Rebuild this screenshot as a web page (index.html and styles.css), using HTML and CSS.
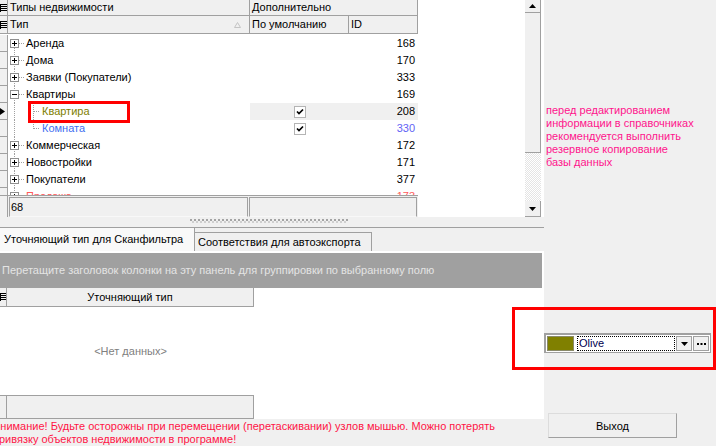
FILE: index.html
```html
<!DOCTYPE html>
<html lang="ru">
<head>
  <meta charset="UTF-8" />
  <title>Типы недвижимости</title>
  <link rel="stylesheet" href="styles.css">
</head>
<body>
  <div class="app">
    <div class="left">
      <div class="top">
        <div class="grid">
          <div class="hrow band">
            <div class="ind"><svg class="lines" width="7" height="8"><path d="M0.5 0V8M1 0.5H7M1 2.5H7M1 4.5H7M1 6.5H7" stroke="#000"/></svg></div>
            <div class="hcell w-type">Типы недвижимости</div>
            <div class="hcell w-extra">Дополнительно</div>
          </div>
          <div class="hrow cols">
            <div class="ind"><svg class="lines" width="7" height="8"><path d="M0.5 0V8M1 0.5H7M1 2.5H7M1 4.5H7M1 6.5H7" stroke="#000"/></svg></div>
            <div class="hcell w-type">Тип<svg class="sort" width="7" height="6"><path d="M3.5 0.5L6.5 5.5H0.5Z" fill="none" stroke="#c4c4c4"/></svg></div>
            <div class="hcell w-def">По умолчанию</div>
            <div class="hcell w-id">ID</div>
          </div>

          <div class="rows">
            <div class="row">
              <div class="ind"></div>
              <div class="tree first"><svg class="exp" width="9" height="9"><rect x="0.5" y="0.5" width="8" height="8" fill="#fff" stroke="#8f8f8f"/><path d="M2 4.5H7M4.5 2V7" stroke="#000"/></svg><span>Аренда</span></div>
              <div class="def"></div>
              <div class="id">168</div>
            </div>
            <div class="row">
              <div class="ind"></div>
              <div class="tree"><svg class="exp" width="9" height="9"><rect x="0.5" y="0.5" width="8" height="8" fill="#fff" stroke="#8f8f8f"/><path d="M2 4.5H7M4.5 2V7" stroke="#000"/></svg><span>Дома</span></div>
              <div class="def"></div>
              <div class="id">170</div>
            </div>
            <div class="row">
              <div class="ind"></div>
              <div class="tree"><svg class="exp" width="9" height="9"><rect x="0.5" y="0.5" width="8" height="8" fill="#fff" stroke="#8f8f8f"/><path d="M2 4.5H7M4.5 2V7" stroke="#000"/></svg><span>Заявки (Покупатели)</span></div>
              <div class="def"></div>
              <div class="id">333</div>
            </div>
            <div class="row">
              <div class="ind"></div>
              <div class="tree"><svg class="exp" width="9" height="9"><rect x="0.5" y="0.5" width="8" height="8" fill="#fff" stroke="#8f8f8f"/><path d="M2 4.5H7" stroke="#000"/></svg><span>Квартиры</span></div>
              <div class="def"></div>
              <div class="id">169</div>
            </div>
            <div class="row current">
              <div class="ind"><svg class="arrow" width="5" height="7"><path d="M0 0L5 3.5L0 7Z" fill="#000"/></svg></div>
              <div class="tree child"><span class="olive">Квартира</span></div>
              <div class="def"><svg class="check" width="12" height="12"><rect x="0.5" y="0.5" width="11" height="11" fill="#fff" stroke="#b4b4b4"/><path d="M3 5.5L5 7.5L9 3.5" fill="none" stroke="#000" stroke-width="1.7"/></svg></div>
              <div class="id">208</div>
            </div>
            <div class="row">
              <div class="ind"></div>
              <div class="tree child last"><span class="blue">Комната</span></div>
              <div class="def"><svg class="check" width="12" height="12"><rect x="0.5" y="0.5" width="11" height="11" fill="#fff" stroke="#b4b4b4"/><path d="M3 5.5L5 7.5L9 3.5" fill="none" stroke="#000" stroke-width="1.7"/></svg></div>
              <div class="id blue-id">330</div>
            </div>
            <div class="row">
              <div class="ind"></div>
              <div class="tree"><svg class="exp" width="9" height="9"><rect x="0.5" y="0.5" width="8" height="8" fill="#fff" stroke="#8f8f8f"/><path d="M2 4.5H7M4.5 2V7" stroke="#000"/></svg><span>Коммерческая</span></div>
              <div class="def"></div>
              <div class="id">172</div>
            </div>
            <div class="row">
              <div class="ind"></div>
              <div class="tree"><svg class="exp" width="9" height="9"><rect x="0.5" y="0.5" width="8" height="8" fill="#fff" stroke="#8f8f8f"/><path d="M2 4.5H7M4.5 2V7" stroke="#000"/></svg><span>Новостройки</span></div>
              <div class="def"></div>
              <div class="id">171</div>
            </div>
            <div class="row">
              <div class="ind"></div>
              <div class="tree"><svg class="exp" width="9" height="9"><rect x="0.5" y="0.5" width="8" height="8" fill="#fff" stroke="#8f8f8f"/><path d="M2 4.5H7M4.5 2V7" stroke="#000"/></svg><span>Покупатели</span></div>
              <div class="def"></div>
              <div class="id">377</div>
            </div>
            <div class="row">
              <div class="ind"></div>
              <div class="tree"><svg class="exp" width="9" height="9"><rect x="0.5" y="0.5" width="8" height="8" fill="#fff" stroke="#8f8f8f"/><path d="M2 4.5H7M4.5 2V7" stroke="#000"/></svg><span class="red">Продажа</span></div>
              <div class="def"></div>
              <div class="id red">173</div>
            </div>

            <div class="focus-mark"></div>
          </div>

          <div class="gfoot">
            <div class="ind"></div>
            <div class="fpanel">
              <div class="fcell f-type">68</div>
              <div class="fcell f-extra"></div>
            </div>
          </div>
        </div>

        <div class="vscroll">
          <div class="sbtn up"><svg width="7" height="4"><path d="M3.5 0L7 4H0Z" fill="#000"/></svg></div>
          <div class="thumb"></div>
          <div class="track"></div>
          <div class="sbtn down"><svg width="7" height="4"><path d="M0 0H7L3.5 4Z" fill="#000"/></svg></div>
        </div>
      </div>

      <div class="splitter"><div class="grip"></div></div>

      <div class="tabs">
        <div class="tab active">Уточняющий тип для Сканфильтра</div>
        <div class="tab">Соответствия для автоэкспорта</div>
      </div>

      <div class="group">Перетащите заголовок колонки на эту панель для группировки по выбранному полю</div>

      <div class="sub">
        <div class="shead">
          <div class="ind"><svg class="lines" width="6" height="8"><path d="M0.5 0V8M1 0.5H6M1 2.5H6M1 4.5H6M1 6.5H6" stroke="#000"/></svg></div>
          <div class="scol">Уточняющий тип</div>
        </div>
        <div class="empty">&lt;Нет данных&gt;</div>
        <div class="sfoot">
          <div class="ind"></div>
          <div class="scol"></div>
        </div>
      </div>

      <div class="warning">
        <div class="warn-text">Внимание! Будьте осторожны при перемещении (перетаскивании) узлов мышью. Можно потерять<br>привязку объектов недвижимости в программе!</div>
      </div>
    </div>

    <div class="right">
      <div class="note">перед редактированием<br>информации в справочниках<br>рекомендуется выполнить<br>резервное копирование<br>базы данных</div>

      <div class="combo">
        <div class="swatch"></div>
        <div class="cname">Olive</div>
        <div class="cbtn"><svg width="7" height="4"><path d="M0 0H7L3.5 4Z" fill="#000"/></svg></div>
        <div class="cbtn dots"><svg width="9" height="2"><path d="M0 0H2V2H0ZM3.5 0H5.5V2H3.5ZM7 0H9V2H7Z" fill="#000"/></svg></div>
      </div>

      <button class="exit">Выход</button>
    </div>

    <div class="combo-mark"></div>
  </div>
</body>
</html>
```

FILE: styles.css
```css
body {
  margin: 0;
  background: #f0f0f0;
  font-family: "Liberation Sans", Arial, sans-serif;
  font-size: 11px;
  color: #000;
}
.app {
  position: relative;
  display: flex;
  width: 716px;
  height: 446px;
  overflow: hidden;
}
.left {
  width: 544px;
  display: flex;
  flex-direction: column;
  background: #fff;
}
.right {
  flex: 1;
  display: flex;
  flex-direction: column;
  align-items: flex-start;
  background: #f0f0f0;
}

/* top grid */
.top {
  display: flex;
  height: 217px;
  background: #fff;
}
.grid {
  width: 525px;
  display: flex;
  flex-direction: column;
}
.ind {
  flex: none;
  width: 8px;
  box-sizing: border-box;
  background: #f0f0f0;
  border-right: 1px solid #a0a0a0;
  border-bottom: 1px solid #a0a0a0;
  display: flex;
  align-items: center;
}
.hrow {
  display: flex;
}
.band {
  height: 16px;
  line-height: 15px;
}
.cols {
  height: 18px;
  line-height: 17px;
}
.hcell {
  box-sizing: border-box;
  background: #f0f0f0;
  border-right: 1px solid #a0a0a0;
  border-bottom: 1px solid #a0a0a0;
  padding-left: 2px;
  white-space: nowrap;
  overflow: hidden;
  display: flex;
  align-items: center;
}
.w-type { width: 242px; }
.w-extra { width: 168px; }
.w-def { width: 99px; }
.w-id { width: 69px; }
.sort {
  margin-left: auto;
  margin-right: 8px;
}

.rows {
  position: relative;
  height: 161px;
  box-sizing: border-box;
  padding-top: 1px;
  overflow: hidden;
}
.row {
  display: flex;
  height: 17px;
  line-height: 17px;
  white-space: nowrap;
}
.tree {
  --dv: repeating-linear-gradient(#a0a0a0 0 1px, transparent 1px 2px);
  --dh: repeating-linear-gradient(90deg, #a0a0a0 0 1px, transparent 1px 2px);
  flex: none;
  width: 242px;
  box-sizing: border-box;
  display: flex;
  align-items: center;
  background: var(--dh) 11px 8px / 6px 1px no-repeat, var(--dv) 6px 0 / 1px 100% no-repeat;
}
.tree.first {
  background: var(--dh) 11px 8px / 6px 1px no-repeat, var(--dv) 6px 13px / 1px 100% no-repeat;
}
.tree .exp {
  margin-left: 2px;
  margin-right: 7px;
}
.tree.child {
  padding-left: 34px;
  background: var(--dh) 26px 8px / 6px 1px no-repeat, var(--dv) 25px 0 / 1px 100% no-repeat, var(--dv) 6px 0 / 1px 100% no-repeat;
}
.tree.child.last {
  background: var(--dh) 26px 8px / 6px 1px no-repeat, var(--dv) 25px 0 / 1px 9px no-repeat, var(--dv) 6px 0 / 1px 100% no-repeat;
}
.def {
  flex: none;
  width: 99px;
  display: flex;
  justify-content: center;
  align-items: center;
}
.id {
  flex: none;
  width: 69px;
  box-sizing: border-box;
  text-align: right;
  padding-right: 3px;
}
.current .def,
.current .id {
  background: #f0f0f0;
}
.olive { color: #808000; }
.blue { color: #3f6ff0; }
.blue-id { color: #6262f5; }
.red { color: #ff5a5a; }

.focus-mark {
  position: absolute;
  left: 28px;
  top: 67px;
  width: 102px;
  height: 22px;
  box-sizing: border-box;
  border: 3px solid #ff0000;
}

.gfoot {
  display: flex;
  height: 22px;
}
.gfoot .ind {
  border-top: 1px solid #a0a0a0;
  border-bottom: none;
}
.fpanel {
  display: flex;
  gap: 1px;
  width: 410px;
  box-sizing: border-box;
  border-top: 1px solid #a0a0a0;
  background: #f0f0f0;
  padding: 1px 1px 0 1px;
}
.fcell {
  box-sizing: border-box;
  border: 1px solid #a0a0a0;
  border-bottom-color: #f8f8f8;
  padding-left: 1px;
  line-height: 18px;
}
.f-type { width: 240px; }
.f-extra { width: 168px; }

.vscroll {
  width: 16px;
  display: flex;
  flex-direction: column;
}
.sbtn {
  box-sizing: border-box;
  background: #f0f0f0;
  border-right: 1px solid #a0a0a0;
  border-bottom: 1px solid #a0a0a0;
  display: flex;
  justify-content: center;
  align-items: center;
}
.up { height: 13px; }
.down { height: 16px; }
.thumb {
  height: 140px;
  box-sizing: border-box;
  background: #f0f0f0;
  border-right: 1px solid #a0a0a0;
  border-bottom: 1px solid #a0a0a0;
}
.track {
  height: 48px;
  background: repeating-conic-gradient(#e4e4e4 0 25%, #fff 0 50%) 0 0 / 2px 2px;
}

/* splitter and tabs */
.splitter {
  height: 8px;
  background: #f0f0f0;
  border-bottom: 1px solid #a0a0a0;
  padding: 2px 0 0 190px;
}
.grip {
  width: 158px;
  height: 4px;
  background:
    repeating-linear-gradient(90deg, #a4a4a4 0 2px, transparent 2px 4px) 0 0 / 100% 2px no-repeat,
    repeating-linear-gradient(90deg, transparent 0 2px, #cfcfcf 2px 4px) 0 2px / 100% 2px no-repeat;
}
.tabs {
  display: flex;
  align-items: flex-end;
  height: 25px;
  box-sizing: border-box;
  background: #f0f0f0;
  border-bottom: 2px solid #fff;
  white-space: nowrap;
}
.tab {
  box-sizing: border-box;
}
.tab.active {
  width: 195px;
  height: 23px;
  line-height: 23px;
  padding-left: 4px;
  background: #f9f9f9;
  border-right: 1px solid #a0a0a0;
}
.tab:not(.active) {
  width: 177px;
  height: 19px;
  line-height: 19px;
  padding-left: 3px;
  border-top: 1px solid #a0a0a0;
  border-right: 1px solid #a0a0a0;
}
.group {
  height: 35px;
  line-height: 35px;
  margin-right: 2px;
  padding-left: 2px;
  background: #a0a0a0;
  color: #e4e4e4;
  white-space: nowrap;
  overflow: hidden;
}

/* lower grid */
.sub {
  height: 131px;
  display: flex;
  flex-direction: column;
  background: #fff;
}
.shead {
  display: flex;
  height: 19px;
}
.shead .ind,
.sfoot .ind {
  width: 7px;
}
.scol {
  width: 247px;
  box-sizing: border-box;
  background: #f0f0f0;
  border-right: 1px solid #a0a0a0;
  border-bottom: 1px solid #a0a0a0;
  text-align: center;
  line-height: 18px;
}
.empty {
  flex: 1;
  width: 247px;
  margin-left: 7px;
  display: flex;
  justify-content: center;
  align-items: center;
  color: #808080;
}
.sfoot {
  display: flex;
  height: 24px;
}
.sfoot .ind,
.sfoot .scol {
  border-top: 1px solid #a0a0a0;
}
.warning {
  flex: 1;
  background: #f0f0f0;
  overflow: hidden;
  padding-top: 1px;
}
.warn-text {
  margin-left: -7px;
  line-height: 13px;
  color: #ff1446;
  white-space: nowrap;
}

/* right pane */
.note {
  margin: 104px 0 0 2px;
  line-height: 13px;
  color: #ff148c;
}
.combo {
  margin-top: 164px;
  width: 167px;
  height: 20px;
  box-sizing: border-box;
  display: flex;
  background: #fff;
  border: 1px solid #a0a0a0;
  border-width: 2px 1px 1px 2px;
  padding: 1px;
}
.swatch {
  width: 27px;
  box-sizing: border-box;
  background: #808000;
  border: 1px solid #8a8a6a;
}
.cname {
  width: 98px;
  margin-left: 3px;
  box-sizing: border-box;
  border: 1px dotted #000;
  padding-left: 1px;
  line-height: 13px;
  color: #000050;
}
.cbtn {
  width: 16px;
  margin-left: 1px;
  box-sizing: border-box;
  background: #f0f0f0;
  border: 1px solid #a0a0a0;
  display: flex;
  justify-content: center;
  align-items: center;
}
.exit {
  margin: 60px 0 0 4px;
  width: 129px;
  height: 25px;
  padding: 0;
  background: #f0f0f0;
  border: 1px solid;
  border-color: #dcdcdc #a0a0a0 #a0a0a0 #dcdcdc;
  font-family: "Liberation Sans", Arial, sans-serif;
  font-size: 11px;
  color: #000;
}
.combo-mark {
  position: absolute;
  left: 512px;
  top: 307px;
  width: 204px;
  height: 63px;
  box-sizing: border-box;
  border: 3px solid #ff0000;
}
```
